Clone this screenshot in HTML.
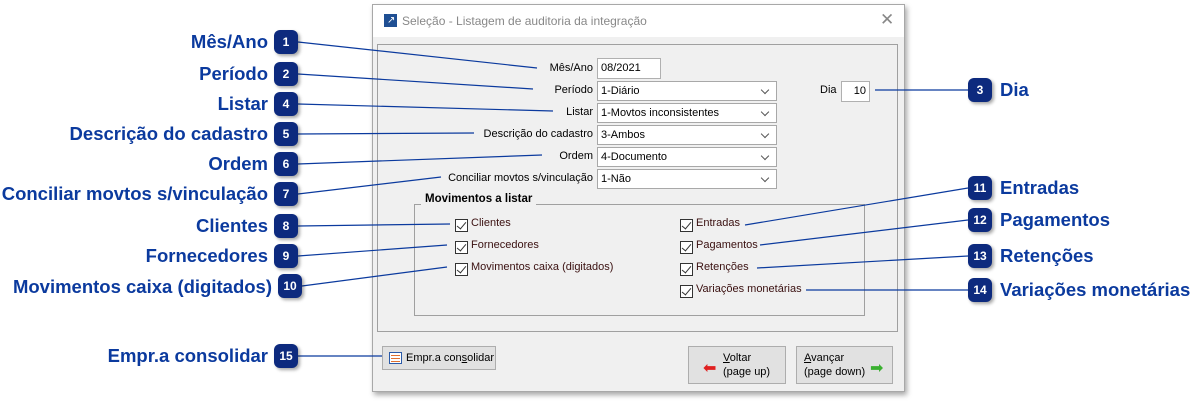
<!DOCTYPE html>
<html><head><meta charset="utf-8"><style>
*{box-sizing:border-box;margin:0;padding:0}
body{width:1200px;height:405px;background:#fff;position:relative;overflow:hidden;font-family:"Liberation Sans",sans-serif}
.a{position:absolute}
.lbl{position:absolute;font-weight:bold;color:#0b3a9e;font-size:18.5px;white-space:nowrap;line-height:22px}
.lbl.r{text-align:right;right:932px}
.bd{position:absolute;width:24px;height:24px;background:#0d2a7e;border-radius:6px;color:#fff;font-size:12px;font-weight:bold;text-align:center;line-height:24px;box-shadow:2px 2px 3px rgba(0,0,0,.35)}
.dlg{position:absolute;left:372px;top:4px;width:533px;height:388px;background:#f0f0f0;border:1px solid #a8a8a8;box-shadow:2px 3px 5px rgba(0,0,0,.35)}
.tb{position:absolute;left:0;top:0;width:531px;height:32px;background:#fff}
.f{font-size:11px;color:#000;position:absolute;white-space:nowrap}
.fl{font-size:11px;position:absolute;text-align:right;white-space:nowrap;width:200px}
.inp{position:absolute;background:#fff;border:1px solid #b0b0b0;height:21px;font-size:11px;padding:3px 3px;line-height:13px}
.cb{position:absolute;width:175px;height:20px;background:#fff;border:1px solid #a8a8a8;font-size:11px;padding:3px 3px;line-height:13px}
.cb:after{content:"";position:absolute;right:8px;top:5px;width:5px;height:5px;border-right:1px solid #555;border-bottom:1px solid #555;transform:rotate(45deg)}
.ck{position:absolute;width:13px;height:13px;border:1px solid #333;background:#fff}
.ck:after{content:"";position:absolute;left:3px;top:0px;width:4px;height:8px;border-right:1.5px solid #333;border-bottom:1.5px solid #333;transform:rotate(40deg)}
.ct{position:absolute;font-size:11px;color:#3a1010;white-space:nowrap}
.btn{position:absolute;background:#e1e1e1;border:1px solid #adadad;font-size:11px;color:#000}
</style></head><body>
<div class="dlg">
 <div class="tb">
  <div class="a" style="left:11px;top:9px;width:13px;height:13px;background:#1f4f93"></div>
  <div class="a" style="left:14px;top:10px;color:#fff;font-size:10px;line-height:11px">↗</div>
  <div class="f" style="left:29px;top:9px;color:#888;font-size:12px">Seleção - Listagem de auditoria da integração</div>
  <div class="f" style="left:507px;top:5px;color:#888;font-size:17px">✕</div>
 </div>
 <div class="a" style="left:4px;top:39px;width:521px;height:288px;border:1px solid #a0a0a0"></div>
 <div class="fl" style="left:20px;top:57px">Mês/Ano</div>
 <div class="inp" style="left:224px;top:53px;width:64px">08/2021</div>
 <div class="fl" style="left:20px;top:79px">Período</div>
 <div class="cb" style="left:224px;top:76px;width:180px">1-Diário</div>
 <div class="fl" style="left:20px;top:101px">Listar</div>
 <div class="cb" style="left:224px;top:98px;width:180px">1-Movtos inconsistentes</div>
 <div class="fl" style="left:20px;top:123px">Descrição do cadastro</div>
 <div class="cb" style="left:224px;top:120px;width:180px">3-Ambos</div>
 <div class="fl" style="left:20px;top:145px">Ordem</div>
 <div class="cb" style="left:224px;top:142px;width:180px">4-Documento</div>
 <div class="fl" style="left:20px;top:167px">Conciliar movtos s/vinculação</div>
 <div class="cb" style="left:224px;top:164px;width:180px">1-Não</div>
 <div class="f" style="left:447px;top:79px">Dia</div>
 <div class="inp" style="left:468px;top:76px;width:29px;text-align:right">10</div>
 <div class="a" style="left:41px;top:199px;width:451px;height:112px;border:1px solid #a0a0a0"></div>
 <div class="f" style="left:48px;top:188px;font-weight:bold;background:#f0f0f0;padding:0 4px;font-size:11.5px">Movimentos a listar</div>
 <div class="ck" style="left:82px;top:214px"></div><div class="ct" style="left:98px;top:212px">Clientes</div>
 <div class="ck" style="left:82px;top:236px"></div><div class="ct" style="left:98px;top:234px">Fornecedores</div>
 <div class="ck" style="left:82px;top:258px"></div><div class="ct" style="left:98px;top:256px">Movimentos caixa (digitados)</div>
 <div class="ck" style="left:307px;top:214px"></div><div class="ct" style="left:323px;top:212px">Entradas</div>
 <div class="ck" style="left:307px;top:236px"></div><div class="ct" style="left:323px;top:234px">Pagamentos</div>
 <div class="ck" style="left:307px;top:258px"></div><div class="ct" style="left:323px;top:256px">Retenções</div>
 <div class="ck" style="left:307px;top:280px"></div><div class="ct" style="left:323px;top:278px">Variações monetárias</div>
 <div class="btn" style="left:9px;top:341px;width:114px;height:24px">
  <div class="a" style="left:6px;top:5px;width:13px;height:12px;border:1px solid #2a5aa8;background:#fff"></div>
  <div class="a" style="left:8px;top:8px;width:9px;height:1px;background:#e07030;box-shadow:0 3px 0 #e07030,0 6px 0 #e07030"></div>
  <div class="f" style="left:23px;top:5px">Empr.a con<u>s</u>olidar</div>
 </div>
 <div class="btn" style="left:315px;top:341px;width:98px;height:38px">
  <div class="a" style="left:14px;top:11px;color:#e02020;font-size:16px">⬅</div>
  <div class="f" style="left:34px;top:4px;line-height:14px"><u>V</u>oltar<br>(page up)</div>
 </div>
 <div class="btn" style="left:423px;top:341px;width:97px;height:38px">
  <div class="f" style="left:7px;top:4px;line-height:14px"><u>A</u>vançar<br>(page down)</div>
  <div class="a" style="left:73px;top:11px;color:#3ab030;font-size:16px">➡</div>
 </div>
</div>
<svg class="a" style="left:0;top:0" width="1200" height="405"><g stroke="#0b3a9e" stroke-width="1.2" fill="none">
<line x1="298" y1="42" x2="537" y2="68"/><line x1="298" y1="74" x2="533" y2="89"/>
<line x1="298" y1="104" x2="553" y2="111"/><line x1="298" y1="134" x2="474" y2="133"/>
<line x1="298" y1="164" x2="542" y2="155"/><line x1="298" y1="194" x2="441" y2="177"/>
<line x1="298" y1="226" x2="450" y2="224"/><line x1="298" y1="256" x2="447" y2="245"/>
<line x1="302" y1="286" x2="447" y2="267"/><line x1="298" y1="356" x2="382" y2="356"/>
<line x1="875" y1="90" x2="968" y2="90"/><line x1="745" y1="225" x2="968" y2="188"/>
<line x1="760" y1="245" x2="968" y2="220"/><line x1="757" y1="268" x2="968" y2="256"/>
<line x1="806" y1="290" x2="968" y2="290"/></g></svg>
<div class="lbl r" style="top:31px">Mês/Ano</div><div class="bd" style="left:274px;top:30px">1</div>
<div class="lbl r" style="top:63px">Período</div><div class="bd" style="left:274px;top:62px">2</div>
<div class="lbl r" style="top:93px">Listar</div><div class="bd" style="left:274px;top:92px">4</div>
<div class="lbl r" style="top:123px">Descrição do cadastro</div><div class="bd" style="left:274px;top:122px">5</div>
<div class="lbl r" style="top:153px">Ordem</div><div class="bd" style="left:274px;top:152px">6</div>
<div class="lbl r" style="top:183px">Conciliar movtos s/vinculação</div><div class="bd" style="left:274px;top:182px">7</div>
<div class="lbl r" style="top:215px">Clientes</div><div class="bd" style="left:274px;top:214px">8</div>
<div class="lbl r" style="top:245px">Fornecedores</div><div class="bd" style="left:274px;top:244px">9</div>
<div class="lbl" style="top:276px;right:928px">Movimentos caixa (digitados)</div><div class="bd" style="left:278px;top:274px">10</div>
<div class="lbl r" style="top:345px">Empr.a consolidar</div><div class="bd" style="left:274px;top:344px">15</div>
<div class="bd" style="left:968px;top:78px">3</div><div class="lbl" style="left:1000px;top:79px">Dia</div>
<div class="bd" style="left:968px;top:176px">11</div><div class="lbl" style="left:1000px;top:177px">Entradas</div>
<div class="bd" style="left:968px;top:208px">12</div><div class="lbl" style="left:1000px;top:209px">Pagamentos</div>
<div class="bd" style="left:968px;top:244px">13</div><div class="lbl" style="left:1000px;top:245px">Retenções</div>
<div class="bd" style="left:968px;top:278px">14</div><div class="lbl" style="left:1000px;top:279px">Variações monetárias</div>
</body></html>
